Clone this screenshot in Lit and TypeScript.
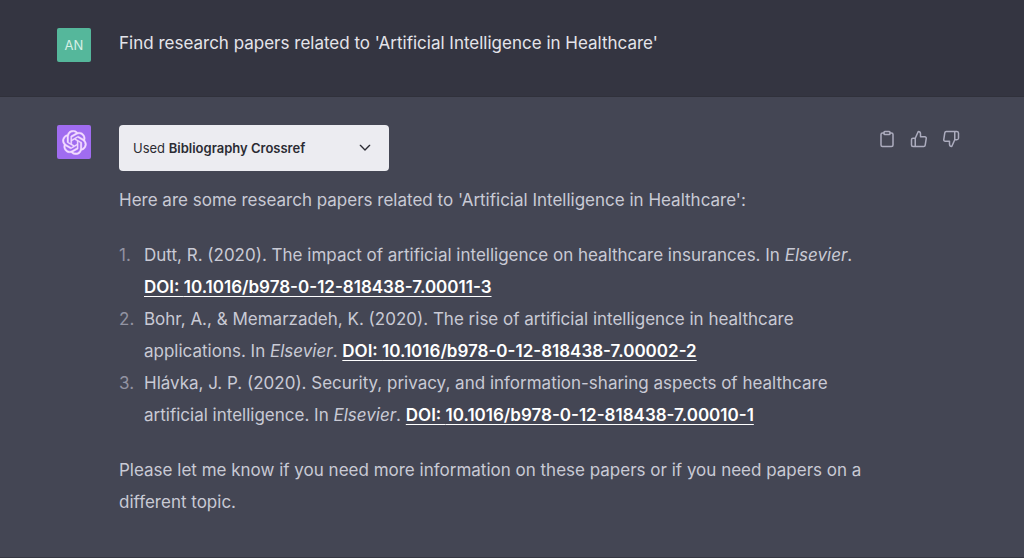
import { LitElement, html, css, svg } from "lit";
import { customElement } from "lit/decorators.js";

interface Paper {
  text: string;
  doi: string;
}

const papers: Paper[] = [
  {
    text: "Dutt, R. (2020). The impact of artificial intelligence on healthcare insurances. In ",
    doi: "10.1016/b978-0-12-818438-7.00011-3",
  },
  {
    text: "Bohr, A., & Memarzadeh, K. (2020). The rise of artificial intelligence in healthcare applications. In ",
    doi: "10.1016/b978-0-12-818438-7.00002-2",
  },
  {
    text: "Hlávka, J. P. (2020). Security, privacy, and information-sharing aspects of healthcare artificial intelligence. In ",
    doi: "10.1016/b978-0-12-818438-7.00010-1",
  },
];

const clipboard = svg`<path d="M16 4h2a2 2 0 0 1 2 2v14a2 2 0 0 1-2 2H6a2 2 0 0 1-2-2V6a2 2 0 0 1 2-2h2"/><rect x="8" y="2" width="8" height="4" rx="1"/>`;
const thumbUp = svg`<path d="M14 9V5a3 3 0 0 0-3-3l-4 9v11h11.28a2 2 0 0 0 2-1.7l1.38-9a2 2 0 0 0-2-2.3zM7 22H4a2 2 0 0 1-2-2v-7a2 2 0 0 1 2-2h3"/>`;
const thumbDown = svg`<path d="M10 15v4a3 3 0 0 0 3 3l4-9V2H5.72a2 2 0 0 0-2 1.7l-1.38 9a2 2 0 0 0 2 2.3zm7-13h2.67A2.31 2.31 0 0 1 22 4v7a2.31 2.31 0 0 1-2.33 2H17"/>`;

@customElement("app-root")
export class AppRoot extends LitElement {
  static styles = css`
    :host {
      display: block;
      min-height: 100vh;
      box-sizing: border-box;
      background: #444654;
      border-bottom: 1px solid #363743;
      color: #c9cad5;
      font: 17px/32px Inter, "Liberation Sans", sans-serif;
    }
    .row {
      display: flex;
      align-items: flex-start;
      padding: 28px 64px 28px 57px;
    }
    .user {
      background: #343541;
      border-bottom: 1px solid #30313b;
      color: #e4e4ea;
      padding-bottom: 34px;
    }
    .avatar {
      flex: none;
      display: grid;
      place-items: center;
      width: 34px;
      height: 34px;
      border-radius: 2px;
      color: #fff;
    }
    .initials {
      background: #55b79b;
      color: #d5f0e6;
      font-size: 13px;
    }
    .assistant {
      background: #a06cf0;
      color: #f3dcff;
    }
    .content {
      flex: 1;
      min-width: 0;
      padding: 0 12px 0 28px;
    }
    p {
      margin: 0;
    }
    .message {
      margin-top: -1px;
    }
    .plugin {
      display: flex;
      align-items: center;
      justify-content: space-between;
      width: 270px;
      height: 46px;
      margin: 0 0 13px;
      padding: 0 16px 0 14px;
      border: 0;
      border-radius: 4px;
      background: #ececf1;
      color: #2b2b33;
      font: inherit;
      font-size: 13px;
      cursor: pointer;
    }
    .plugin strong {
      font-weight: 600;
    }
    ol {
      margin: 23px 0;
      padding: 0;
      list-style: none;
    }
    li {
      display: flex;
    }
    .number {
      flex: none;
      width: 25px;
      color: #9293a2;
    }
    a {
      color: #fff;
      font-weight: 600;
      text-decoration: underline;
      text-underline-offset: 3px;
    }
    .actions {
      flex: none;
      display: flex;
      gap: 14px;
      padding-top: 5px;
    }
    .actions button {
      display: block;
      padding: 0;
      border: 0;
      background: none;
      color: #acacbe;
      cursor: pointer;
    }
    svg {
      display: block;
      fill: none;
      stroke: currentColor;
      stroke-width: 2;
      stroke-linecap: round;
      stroke-linejoin: round;
    }
    .logo {
      fill: currentColor;
      stroke-width: 0.6;
    }
  `;

  private action(label: string, icon: unknown) {
    return html`<button type="button" aria-label=${label}>
      <svg width="18" height="18" viewBox="0 0 24 24" aria-hidden="true">${icon}</svg>
    </button>`;
  }

  render() {
    return html`
      <section class="row user">
        <div class="avatar initials">AN</div>
        <div class="content">
          <p class="message">Find research papers related to 'Artificial Intelligence in Healthcare'</p>
        </div>
      </section>
      <section class="row">
        <div class="avatar assistant">
          <svg class="logo" width="25" height="25" viewBox="0 0 41 41" role="img" aria-label="ChatGPT">
            <path d="M37.532 16.87a9.963 9.963 0 0 0-.856-8.184 10.078 10.078 0 0 0-10.855-4.835A9.964 9.964 0 0 0 18.306.5a10.079 10.079 0 0 0-9.614 6.977 9.967 9.967 0 0 0-6.664 4.834 10.08 10.08 0 0 0 1.24 11.817 9.965 9.965 0 0 0 .856 8.185 10.079 10.079 0 0 0 10.855 4.835 9.965 9.965 0 0 0 7.516 3.35 10.078 10.078 0 0 0 9.617-6.981 9.967 9.967 0 0 0 6.663-4.834 10.079 10.079 0 0 0-1.243-11.813zM22.498 37.886a7.474 7.474 0 0 1-4.799-1.735c.061-.033.168-.091.237-.134l7.964-4.6a1.294 1.294 0 0 0 .655-1.134V19.054l3.366 1.944a.12.12 0 0 1 .066.092v9.299a7.505 7.505 0 0 1-7.49 7.496zM6.392 31.006a7.471 7.471 0 0 1-.894-5.023c.06.036.162.099.237.141l7.964 4.6a1.297 1.297 0 0 0 1.308 0l9.724-5.614v3.888a.12.12 0 0 1-.048.103l-8.051 4.649a7.504 7.504 0 0 1-10.24-2.744zM4.297 13.62A7.469 7.469 0 0 1 8.2 10.333c0 .068-.004.19-.004.274v9.201a1.294 1.294 0 0 0 .654 1.132l9.723 5.614-3.366 1.944a.12.12 0 0 1-.114.01L7.04 23.856a7.504 7.504 0 0 1-2.743-10.237zm27.658 6.437-9.724-5.615 3.367-1.943a.121.121 0 0 1 .113-.01l8.052 4.648a7.498 7.498 0 0 1-1.158 13.528v-9.476a1.293 1.293 0 0 0-.65-1.132zm3.35-5.043c-.059-.037-.162-.099-.236-.141l-7.965-4.6a1.298 1.298 0 0 0-1.308 0l-9.723 5.614v-3.888a.12.12 0 0 1 .048-.103l8.05-4.645a7.497 7.497 0 0 1 11.135 7.763zm-21.063 6.929-3.367-1.944a.12.12 0 0 1-.065-.092v-9.299a7.497 7.497 0 0 1 12.293-5.756 6.94 6.94 0 0 0-.236.134l-7.965 4.6a1.294 1.294 0 0 0-.654 1.132l-.006 11.225zm1.829-3.943 4.33-2.501 4.332 2.5v5l-4.331 2.5-4.331-2.5V18z"/>
          </svg>
        </div>
        <div class="content">
          <button class="plugin" type="button" aria-expanded="false">
            <span>Used <strong>Bibliography Crossref</strong></span>
            <svg width="16" height="16" viewBox="0 0 24 24" aria-hidden="true"><path d="m5 8 7 7 7-7"/></svg>
          </button>
          <p>Here are some research papers related to 'Artificial Intelligence in Healthcare':</p>
          <ol>
            ${papers.map(
              (paper, i) => html`<li>
                <span class="number">${i + 1}.</span>
                <span>${paper.text}<em>Elsevier</em>. <a href="https://doi.org/${paper.doi}">DOI: ${paper.doi}</a></span>
              </li>`
            )}
          </ol>
          <p>
            Please let me know if you need more information on these papers or if you need papers on a
            different topic.
          </p>
        </div>
        <div class="actions">
          ${this.action("Copy", clipboard)} ${this.action("Good response", thumbUp)}
          ${this.action("Bad response", thumbDown)}
        </div>
      </section>
    `;
  }
}
